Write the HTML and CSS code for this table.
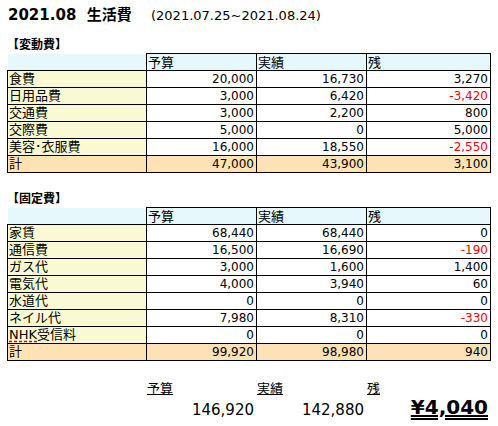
FILE: index.html
```html
<!DOCTYPE html>
<html lang="ja">
<head>
  <meta charset="UTF-8">
  <meta name="viewport" content="width=device-width, initial-scale=1.0">
  <title>2021.08 生活費</title>
  <link rel="stylesheet" href="styles.css">
</head>
<body>
  <div class="sheet">
    <h1 class="title">2021.08&nbsp; 生活費 <span class="period">(2021.07.25~2021.08.24)</span></h1>

    <h2 class="section">【変動費】</h2>
    <table class="grid">
      <colgroup>
        <col class="c-label"><col class="c-num"><col class="c-num"><col class="c-last">
      </colgroup>
      <tr class="head">
        <td class="blank"></td><td>予算</td><td>実績</td><td>残</td>
      </tr>
      <tr><td class="label">食費</td><td>20,000</td><td>16,730</td><td>3,270</td></tr>
      <tr><td class="label">日用品費</td><td>3,000</td><td>6,420</td><td class="minus">-3,420</td></tr>
      <tr><td class="label">交通費</td><td>3,000</td><td>2,200</td><td>800</td></tr>
      <tr><td class="label">交際費</td><td>5,000</td><td>0</td><td>5,000</td></tr>
      <tr><td class="label">美容･衣服費</td><td>16,000</td><td>18,550</td><td class="minus">-2,550</td></tr>
      <tr class="total"><td class="label">計</td><td>47,000</td><td>43,900</td><td>3,100</td></tr>
    </table>

    <h2 class="section fixed">【固定費】</h2>
    <table class="grid">
      <colgroup>
        <col class="c-label"><col class="c-num"><col class="c-num"><col class="c-last">
      </colgroup>
      <tr class="head">
        <td class="blank"></td><td>予算</td><td>実績</td><td>残</td>
      </tr>
      <tr><td class="label">家賃</td><td>68,440</td><td>68,440</td><td>0</td></tr>
      <tr><td class="label">通信費</td><td>16,500</td><td>16,690</td><td class="minus">-190</td></tr>
      <tr><td class="label">ガス代</td><td>3,000</td><td>1,600</td><td>1,400</td></tr>
      <tr><td class="label">電気代</td><td>4,000</td><td>3,940</td><td>60</td></tr>
      <tr><td class="label">水道代</td><td>0</td><td>0</td><td>0</td></tr>
      <tr><td class="label">ネイル代</td><td>7,980</td><td>8,310</td><td class="minus">-330</td></tr>
      <tr><td class="label"><span class="typo">NHK</span>受信料</td><td>0</td><td>0</td><td>0</td></tr>
      <tr class="total"><td class="label">計</td><td>99,920</td><td>98,980</td><td>940</td></tr>
    </table>

    <div class="summary">
      <div></div>
      <div class="sum-col">
        <span class="sum-label">予算</span>
        <span class="sum-value">146,920</span>
      </div>
      <div class="sum-col">
        <span class="sum-label">実績</span>
        <span class="sum-value">142,880</span>
      </div>
      <div class="sum-col">
        <span class="sum-label">残</span>
        <span class="sum-value grand">¥4,040</span>
      </div>
    </div>
  </div>
</body>
</html>
```

FILE: styles.css
```css
body {
  margin: 0;
  background: #fff;
  color: #000;
  font-family: "DejaVu Sans", "Noto Sans CJK JP", sans-serif;
}
.sheet {
  padding: 6px 0 0 7px;
}
.title {
  margin: 0;
  font-size: 15px;
  line-height: 18px;
  font-weight: bold;
  padding-left: 1px;
}
.period {
  font-size: 13px;
  font-weight: normal;
  margin-left: 14px;
}
.section {
  margin: 13px 0 0;
  font-size: 12px;
  line-height: 15px;
  font-weight: bold;
}
.section.fixed {
  margin-top: 19px;
}
.grid {
  border-collapse: collapse;
  table-layout: fixed;
  width: 483px;
  font-size: 12px;
}
.c-label { width: 139px; }
.c-num { width: 110px; }
.c-last { width: 124px; }
.grid td {
  border: 1px solid #000;
  height: 16px;
  padding: 0 2px 0 1px;
  line-height: 16px;
  text-align: right;
  white-space: nowrap;
  overflow: hidden;
}
.grid td.blank {
  border: none;
  background: #fff;
}
.grid .head td {
  background: #e6f8fb;
  text-align: left;
  font-size: 13px;
  font-family: "Noto Sans CJK JP", sans-serif;
}
.grid td.label {
  background: #f9f9d3;
  text-align: left;
  font-size: 13px;
  font-family: "DejaVu Sans", "Noto Sans CJK JP", sans-serif;
}
.grid .total td {
  background: #fde3b4;
}
.minus {
  color: #ff0000;
}
.typo {
  text-decoration: underline dashed #e00000;
  text-underline-offset: 2px;
}
.summary {
  display: grid;
  grid-template-columns: 140px 110px 110px 123px;
  margin-top: 20px;
}
.sum-col {
  display: flex;
  flex-direction: column;
}
.sum-label {
  font-size: 13px;
  line-height: 16px;
  text-decoration: underline;
  align-self: flex-start;
}
.sum-value {
  font-size: 15px;
  line-height: 20px;
  text-align: right;
  padding-right: 3px;
  margin-top: 3px;
}
.sum-value.grand {
  font-size: 20px;
  font-weight: bold;
  text-decoration: underline double;
  padding-right: 2px;
  margin-top: 0;
}
```
